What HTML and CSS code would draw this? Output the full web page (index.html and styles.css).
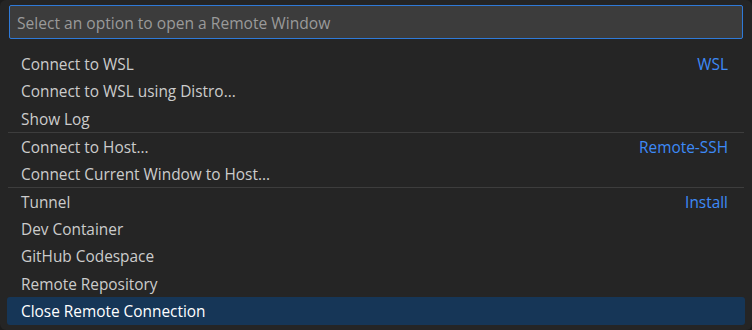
FILE: index.html
```html
<!DOCTYPE html>
<html lang="en">
<head>
  <meta charset="UTF-8" />
  <title>Remote Window</title>
  <link rel="stylesheet" href="styles.css">
</head>
<body>
  <div class="quick-pick">
    <div class="input-box">
      <input type="text" placeholder="Select an option to open a Remote Window">
    </div>

    <div class="list">
      <div class="row"><span class="label">Connect to WSL</span><span class="tag">WSL</span></div>
      <div class="row"><span class="label">Connect to WSL using Distro...</span></div>
      <div class="row"><span class="label">Show Log</span></div>

      <div class="row group-start"><span class="label">Connect to Host...</span><span class="tag">Remote-SSH</span></div>
      <div class="row"><span class="label">Connect Current Window to Host...</span></div>

      <div class="row group-start"><span class="label">Tunnel</span><span class="tag">Install</span></div>
      <div class="row"><span class="label">Dev Container</span></div>
      <div class="row"><span class="label">GitHub Codespace</span></div>
      <div class="row"><span class="label">Remote Repository</span></div>
      <div class="row selected"><span class="label">Close Remote Connection</span></div>
    </div>
  </div>
</body>
</html>
```

FILE: styles.css
```css
* {
  margin: 0; padding: 0;
  box-sizing: border-box;
}

body, html {
  height: 100%;
  background: #1c1c1c;
  font-family: 'Open Sans', sans-serif;
  color: #cccccc;
}

.quick-pick {
  height: 330px;
  background: #252525;
  border-radius: 6px;
  padding: 5px 7px 0 7px;
}

.input-box {
  margin: 0 2px;
}

.input-box input {
  width: 100%;
  height: 34px;
  background: #3c3c3c;
  border: 1px solid #2f7ad8;
  border-radius: 2px;
  padding: 2px 7px 0 7px;
  font-family: inherit;
  font-size: 15.6px;
  color: #cccccc;
  outline: none;
}

.input-box input::placeholder {
  color: #9a9a9a;
}

.list {
  margin-top: 10.5px;
}

.row {
  height: 27.5px;
  display: flex;
  align-items: center;
  justify-content: space-between;
  padding: 2px 17px 0 14px;
  font-size: 15.4px;
  border-radius: 3px;
  white-space: nowrap;
}

.group-start {
  border-top: 1px solid #3d3d3d;
  margin: 0 1px;
  padding-left: 13px;
  padding-right: 16px;
  border-radius: 0;
}

.tag {
  color: #3d8af7;
}

.selected {
  background: #163657;
  color: #ffffff;
}
```
